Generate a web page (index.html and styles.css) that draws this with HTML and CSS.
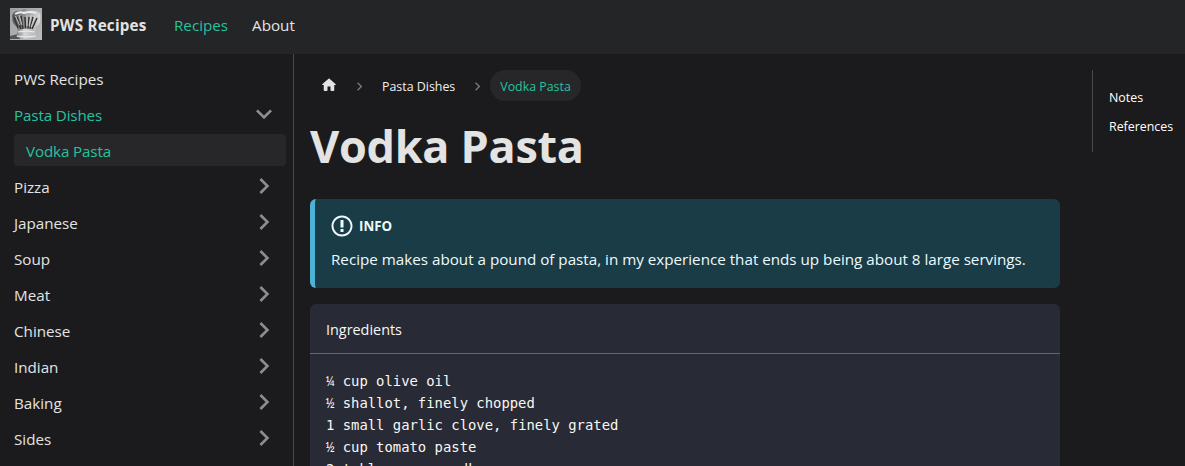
FILE: index.html
```html
<!DOCTYPE html>
<html lang="en">
<head>
<meta charset="utf-8">
<title>Vodka Pasta | PWS Recipes</title>
<link rel="stylesheet" href="styles.css">
</head>
<body>
<svg width="0" height="0" class="defs" aria-hidden="true">
  <symbol id="chevron" viewBox="0 0 24 24"><path d="M7.41 15.41L12 10.83l4.59 4.58L18 14l-6-6-6 6z"/></symbol>
</svg>
<header class="navbar">
  <a class="brand">
    <svg class="logo" viewBox="0 0 32 32">
      <defs>
        <linearGradient id="bg" x1="0" y1="0" x2="1" y2="1"><stop offset="0" stop-color="#a0a0a0"/><stop offset="1" stop-color="#bdbdbd"/></linearGradient>
        <linearGradient id="puff"><stop offset="0" stop-color="#555"/><stop offset=".5" stop-color="#999"/><stop offset="1" stop-color="#ddd"/></linearGradient>
        <linearGradient id="band"><stop offset="0" stop-color="#777"/><stop offset=".4" stop-color="#d5d5d5"/><stop offset="1" stop-color="#b5b5b5"/></linearGradient>
      </defs>
      <path fill="url(#bg)" d="M0 0h32v32H0z"/>
      <path fill="#555" d="M0 28l8-2 2 5H0z"/>
      <path fill="url(#puff)" d="M2.500 10C1 5 6 2 10 3c4-3 10-2 13 0 5-1 9 3 7 8 1 4-2 6-4 8l-1 4H8l-1-4C4 17 2 14 2.500 10z"/>
      <path fill="none" stroke="#333" stroke-width="1.500" d="M4 9l4 11M7 9l4 12M11 8l2 13M15 9l.5 12M19 9l-1 12M23 9l-3 12M27 10l-5 11"/>
      <path fill="none" stroke="#ddd" stroke-width=".8" d="M5.500 8l4 9M9 7l3 10M17 7v11M21 7l-2 11M25 8l-4 11"/>
      <path fill="none" stroke="#ededed" stroke-width="2" d="M5 6q5-3 9-1 6-2 12 0"/>
      <path fill="url(#band)" d="M8 22q8-3 17 0l2 7q-9 3-21 0z"/>
      <path fill="none" stroke="#eee" d="M8 24q8-2 17 0M7 28q9 2 19 0"/>
    </svg>
    <b class="brand-name">PWS Recipes</b>
  </a>
  <a class="nav-link active">Recipes</a>
  <a class="nav-link">About</a>
</header>
<div class="page">
  <aside class="sidebar">
    <ul class="menu">
      <li class="item"><span>PWS Recipes</span></li>
      <li class="item active"><span>Pasta Dishes</span><svg class="caret down"><use href="#chevron"/></svg></li>
      <li class="item active sub"><span>Vodka Pasta</span></li>
      <li class="item"><span>Pizza</span><svg class="caret"><use href="#chevron"/></svg></li>
      <li class="item"><span>Japanese</span><svg class="caret"><use href="#chevron"/></svg></li>
      <li class="item"><span>Soup</span><svg class="caret"><use href="#chevron"/></svg></li>
      <li class="item"><span>Meat</span><svg class="caret"><use href="#chevron"/></svg></li>
      <li class="item"><span>Chinese</span><svg class="caret"><use href="#chevron"/></svg></li>
      <li class="item"><span>Indian</span><svg class="caret"><use href="#chevron"/></svg></li>
      <li class="item"><span>Baking</span><svg class="caret"><use href="#chevron"/></svg></li>
      <li class="item"><span>Sides</span><svg class="caret"><use href="#chevron"/></svg></li>
    </ul>
  </aside>
  <main class="content">
    <nav class="crumbs">
      <a class="home"><svg viewBox="0 0 24 24"><path d="M10 19v-5h4v5c0 .55.45 1 1 1h3c.55 0 1-.45 1-1v-7h1.700c.46 0 .68-.57.33-.87L12.670 3.600c-.38-.34-.96-.34-1.340 0l-8.360 7.530c-.34.3-.13.87.33.87H5v7c0 .55.45 1 1 1h3c.55 0 1-.45 1-1z"/></svg></a>
      <svg class="sep"><use href="#chevron"/></svg>
      <a class="crumb">Pasta Dishes</a>
      <svg class="sep second"><use href="#chevron"/></svg>
      <a class="crumb current">Vodka Pasta</a>
    </nav>
    <h1 class="title">Vodka Pasta</h1>
    <section class="info">
      <div class="info-head">
        <svg viewBox="0 0 14 16"><path fill-rule="evenodd" d="M7 2.300c3.140 0 5.700 2.560 5.700 5.700s-2.560 5.700-5.700 5.700A5.710 5.710 0 0 1 1.300 8c0-3.140 2.560-5.700 5.700-5.700zM7 1C3.140 1 0 4.140 0 8s3.140 7 7 7 7-3.140 7-7-3.140-7-7-7zm1 3H6v5h2V4zm0 6H6v2h2v-2z"/></svg>
        <span>INFO</span>
      </div>
      <p class="info-text">Recipe makes about a pound of pasta, in my experience that ends up being about 8 large servings.</p>
    </section>
    <section class="code">
      <div class="code-title">Ingredients</div>
      <pre class="lines"><span class="frac">¼</span> cup olive oil
<span class="frac">½</span> shallot, finely chopped
1 small garlic clove, finely grated
<span class="frac">½</span> cup tomato paste
2 tablespoons vodka</pre>
    </section>
  </main>
  <nav class="toc">
    <a>Notes</a>
    <a>References</a>
  </nav>
</div>
</body>
</html>
```
FILE: styles.css
```css
* { box-sizing: border-box; }
body {
  margin: 0;
  height: 466px;
  overflow: hidden;
  display: flex;
  flex-direction: column;
  background: #1b1b1d;
  color: #e3e3e3;
  font: 15.2px/24px "Open Sans", "Noto Sans", sans-serif;
}
.defs { position: absolute; }
.navbar {
  flex: none;
  height: 54px;
  padding: 0 10px 5px;
  display: flex;
  align-items: center;
  background: #242526;
}
.brand { display: flex; align-items: center; width: 164px; }
.logo { width: 32px; height: 32px; margin: -1px 8px 0 0; }
.brand-name { white-space: nowrap; letter-spacing: .22px; }
.nav-link { margin-right: 24px; }
.active { color: #25c2a0; }
.page { flex: 1; min-height: 0; display: flex; }
.sidebar { width: 294px; flex: none; border-right: 1px solid #48484a; padding: 8px 7px 0 14px; }
.menu { list-style: none; margin: 0; padding: 0; display: grid; gap: 4px; }
.item { height: 32px; display: flex; align-items: center; justify-content: space-between; padding-top: 1px; }
.sub { background: #272729; border-radius: 4px; padding-left: 12px; }
.item.active { letter-spacing: -.14px; }
.caret { width: 32px; height: 32px; margin: -1px 6px 0 0; transform: rotate(90deg); fill: #8d8d8e; }
.down { transform: rotate(180deg); }
.content { width: 766px; flex: none; padding: 16px 0 0 16px; }
.crumbs { height: 31px; display: flex; align-items: center; font-size: 12.4px; line-height: 20px; }
.home { width: 37px; height: 20px; padding-left: 10px; }
.home svg { width: 18px; height: 18px; fill: #e3e3e3; display: block; }
.sep { width: 17px; height: 17px; margin: 2px 10px 0 4px; transform: rotate(90deg); fill: #77777a; }
.crumb { white-space: nowrap; padding: 2px 0 0 4px; color: #f0f0f0; }
.second { margin: 2px 4px 0 14px; }
.current { background: #272729; color: #25c2a0; border-radius: 16px; padding: 7px 10px 4px; }
.title { margin: 15px 0 23px; font-size: 45px; line-height: 60px; font-weight: 700; letter-spacing: -.3px; }
.info { height: 89px; border-left: 5px solid #4cb3d4; border-radius: 6px; background: #193c47; color: #eef9fd; padding: 15px 16px; }
.info-head { height: 24px; display: flex; align-items: center; gap: 6px; font-size: 13.3px; font-weight: 700; }
.info-head svg { width: 22px; height: 24px; fill: #eef9fd; }
.info-text { margin: 9px 0 0; white-space: nowrap; }
.code { margin-top: 16px; height: 162px; overflow: hidden; border-radius: 6px 6px 0 0; background: #282a36; color: #f8f8f2; }
.code-title { height: 50px; padding: 14px 16px 0; border-bottom: 1px solid #606770; font-size: 14.4px; }
.lines { margin: 0; padding: 16px 16px 0; font: 13.88px/22px "DejaVu Sans Mono", monospace; }
.frac { font-family: "Liberation Mono", monospace; line-height: 1; }
.toc { margin: 16px 0 0 32px; height: 82px; width: 92px; border-left: 1px solid #48484a; padding: 18px 0 0 16px; display: grid; grid-auto-rows: 20px; align-content: start; gap: 9px; font-size: 12.4px; line-height: 20px; color: #fff; }
```
